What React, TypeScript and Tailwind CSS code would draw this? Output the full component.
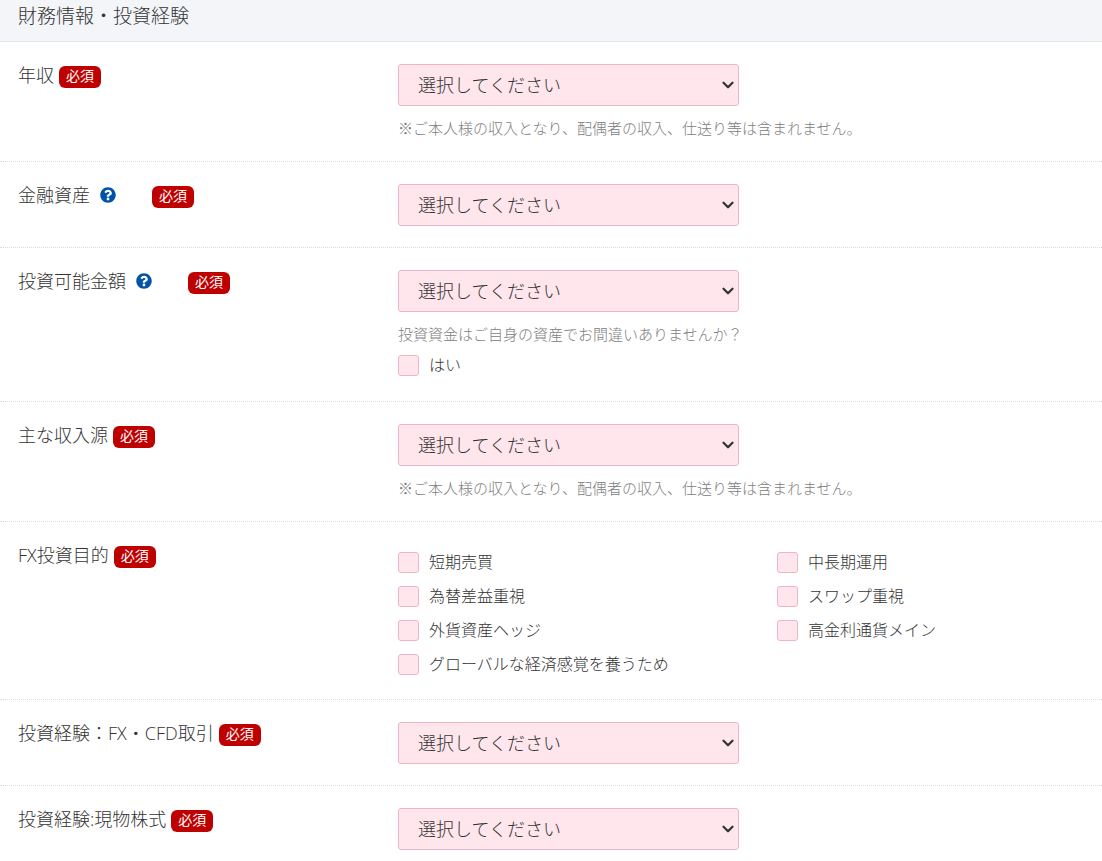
import clsx from "clsx";
import { ChevronDown } from "lucide-react";
import type { ReactNode } from "react";
import { FaQuestionCircle } from "react-icons/fa";

type RowProps = {
  id: string;
  label: string;
  help?: boolean;
  children: ReactNode;
};

const Required = () => (
  <span className="mt-[3px] flex h-[22px] w-[42px] shrink-0 items-center justify-center rounded-md bg-[#bf0000] pb-0.5 text-sm leading-5 font-normal text-white">
    必須
  </span>
);

const Row = ({ id, label, help, children }: RowProps) => (
  <div className="flex border-b border-dotted border-[#dcdcdc] px-[18px] pt-[21px] pb-[21px]">
    <div className="flex w-[380px] shrink-0 items-start">
      <label id={`${id}-label`} htmlFor={id} className="text-lg leading-6">
        {label}
      </label>
      {help && (
        <button
          type="button"
          aria-label={`${label}について`}
          className="mt-1 ml-2.5 cursor-pointer text-[#0053a6]"
        >
          <FaQuestionCircle className="size-4" />
        </button>
      )}
      <div className={clsx(help ? "ml-9" : "ml-[5px]")}>
        <Required />
      </div>
    </div>
    <div className="min-w-0 flex-1 pt-px">{children}</div>
  </div>
);

const SelectBox = ({ id }: { id: string }) => (
  <div className="relative max-w-[341px]">
    <select
      id={id}
      className="block h-[42px] w-full appearance-none rounded-[3px] border border-[#f0b3c9] bg-[#fee6ec] pr-7 pl-[19px] text-lg outline-none"
    >
      <option>選択してください</option>
    </select>
    <ChevronDown
      className="pointer-events-none absolute inset-y-0 right-0.5 my-auto size-[18px]"
      strokeWidth={3}
    />
  </div>
);

const Note = ({ children }: { children: ReactNode }) => (
  <p className="mt-2.5 text-[15px] leading-6 text-[#808080]">{children}</p>
);

const CheckBox = ({ id, label }: { id?: string; label: string }) => (
  <label className="flex h-[21px] w-fit cursor-pointer items-center gap-2.5 text-base leading-5">
    <input
      id={id}
      type="checkbox"
      className="size-[21px] shrink-0 appearance-none rounded-[3px] border border-[#f0b3c9] bg-[#fee6ec] checked:bg-[#f0b3c9]"
    />
    <span className="pb-0.5">{label}</span>
  </label>
);

const purposesLeft = [
  "短期売買",
  "為替差益重視",
  "外貨資産ヘッジ",
  "グローバルな経済感覚を養うため",
];
const purposesRight = ["中長期運用", "スワップ重視", "高金利通貨メイン"];

const incomeNote =
  "※ご本人様の収入となり、配偶者の収入、仕送り等は含まれません。";

const App = () => {
  return (
    <form className="bg-white font-['Open_Sans','Noto_Sans_CJK_JP',sans-serif] font-light text-[#333]">
      <h2 className="border-b border-[#e1e4e8] bg-[#f3f5f9] px-[18px] pt-1 pb-[13px] text-[19px] leading-6">
        財務情報・投資経験
      </h2>

      <Row id="income" label="年収">
        <SelectBox id="income" />
        <Note>{incomeNote}</Note>
      </Row>

      <Row id="assets" label="金融資産" help>
        <SelectBox id="assets" />
      </Row>

      <Row id="investable" label="投資可能金額" help>
        <SelectBox id="investable" />
        <Note>投資資金はご自身の資産でお間違いありませんか？</Note>
        <div className="pt-[9px] pb-1">
          <CheckBox label="はい" />
        </div>
      </Row>

      <Row id="source" label="主な収入源">
        <SelectBox id="source" />
        <Note>{incomeNote}</Note>
      </Row>

      <Row id="purpose" label="FX投資目的">
        <div
          role="group"
          aria-labelledby="purpose-label"
          className="grid grid-cols-[379px_1fr] pt-2 pb-[3px]"
        >
          <div className="flex flex-col gap-[13px]">
            {purposesLeft.map((p, i) => (
              <CheckBox key={p} id={i === 0 ? "purpose" : undefined} label={p} />
            ))}
          </div>
          <div className="flex flex-col gap-[13px]">
            {purposesRight.map((p) => (
              <CheckBox key={p} label={p} />
            ))}
          </div>
        </div>
      </Row>

      <Row id="exp-fx" label="投資経験：FX・CFD取引">
        <SelectBox id="exp-fx" />
      </Row>

      <Row id="exp-stock" label="投資経験:現物株式">
        <SelectBox id="exp-stock" />
      </Row>
    </form>
  );
};

export default App;
